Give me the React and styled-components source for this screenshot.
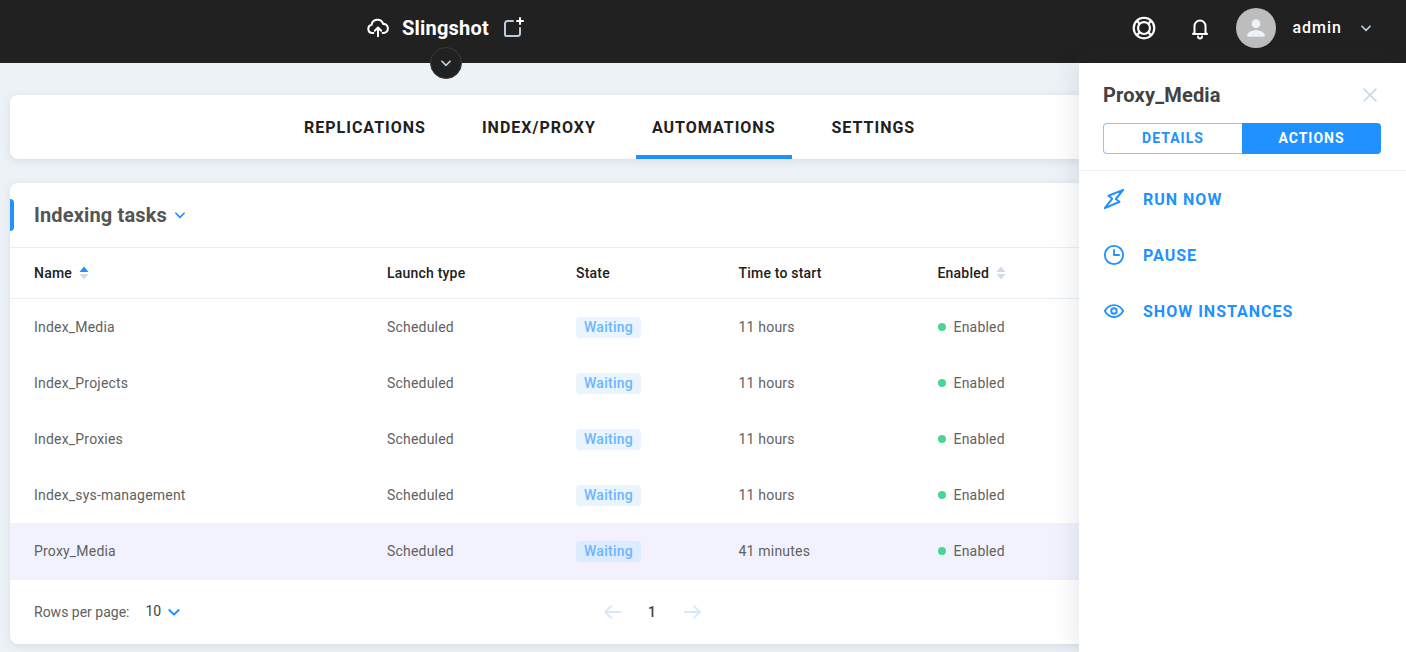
import React from "react";
import styled, { createGlobalStyle } from "styled-components";

const Global = createGlobalStyle`
  html, body { margin: 0; padding: 0; height: 100%; overflow: hidden; background: #edf2f7; }
  body { font-family: Roboto, "Liberation Sans", sans-serif; }
  * { box-sizing: border-box; }
`;

const Page = styled.div`
  position: relative;
  width: 1406px;
  height: 652px;
  overflow: hidden;
  background: #edf2f7;
`;

const Header = styled.header`
  height: 63px;
  background: #212121;
  display: flex;
  align-items: center;
  padding: 0 33px 8px 367px;
  position: relative;
`;

const Brand = styled.div`
  display: flex;
  align-items: center;
  color: #fff;
  font-size: 20px;
  font-weight: 700;
  letter-spacing: 0.2px;
`;

const BrandName = styled.span`
  margin: 0 12px 0 13px;
`;

const Expand = styled.button`
  position: absolute;
  left: 430px;
  top: 47px;
  width: 32px;
  height: 32px;
  border-radius: 50%;
  background: #212121;
  border: 1px solid #3a3a3a;
  padding: 0;
  display: flex;
  align-items: center;
  justify-content: center;
`;

const HeaderRight = styled.div`
  margin-left: auto;
  display: flex;
  align-items: center;
`;

const Avatar = styled.div`
  width: 40px;
  height: 40px;
  border-radius: 50%;
  background: #bdbdbd;
  display: flex;
  align-items: center;
  justify-content: center;
  margin: 0 16px 0 24px;
`;

const BellSlot = styled.div`
  margin-left: 31px;
  display: flex;
`;

const UserName = styled.span`
  color: #fff;
  font-size: 16px;
  font-weight: 500;
  letter-spacing: 1px;
  margin-right: 17px;
`;

const Content = styled.main`
  padding: 32px 10px 0;
`;

const TabsCard = styled.nav`
  height: 64px;
  background: #fff;
  border-radius: 8px;
  box-shadow: 0 2px 8px rgba(45, 70, 100, 0.12);
  display: flex;
  padding-left: 278px;
  gap: 24px;
  margin-bottom: 24px;
`;

const Tab = styled.div`
  height: 64px;
  padding: 0 16px;
  display: flex;
  align-items: center;
  font-size: 16px;
  font-weight: 700;
  letter-spacing: 1px;
  color: #212121;
  border-bottom: 4px solid ${(p) => (p.$active ? "#2191ff" : "transparent")};
  border-top: 4px solid transparent;
`;

const TableCard = styled.section`
  height: 461px;
  background: #fff;
  border-radius: 8px;
  box-shadow: 0 2px 8px rgba(45, 70, 100, 0.12);
  overflow: hidden;
  display: flex;
  flex-direction: column;
`;

const TitleBar = styled.div`
  position: relative;
  height: 65px;
  flex: none;
  display: flex;
  align-items: center;
  padding-left: 24px;
  border-bottom: 1px solid #e8eef5;
  gap: 6px;
`;

const TitleMark = styled.span`
  position: absolute;
  left: 0;
  top: 16px;
  width: 4px;
  height: 32px;
  background: #2191ff;
  border-radius: 0 4px 4px 0;
`;

const Title = styled.h2`
  margin: 0;
  font-size: 20px;
  font-weight: 700;
  color: #555;
  letter-spacing: 0.15px;
`;

const Grid = styled.div`
  display: grid;
  grid-template-columns: 353px 189px 162.5px 199px 1fr;
  align-items: center;
  padding-left: 24px;
  letter-spacing: 0.2px;
`;

const HeadRow = styled(Grid)`
  height: 51px;
  flex: none;
  border-bottom: 1px solid #e8eef5;
  font-size: 14px;
  font-weight: 500;
  color: #212121;
`;

const HeadCell = styled.div`
  display: flex;
  align-items: center;
  gap: 7px;
`;

const Row = styled(Grid)`
  height: 56px;
  flex: none;
  font-size: 14px;
  color: #616161;
  background: ${(p) => (p.$selected ? "#f1f2fd" : "#fff")};
`;

const Badge = styled.span`
  justify-self: start;
  background: ${(p) => (p.$selected ? "#dcebff" : "#e9f4ff")};
  color: #6db6ff;
  font-weight: 500;
  font-size: 14px;
  line-height: 21px;
  padding: 0 8px;
  border-radius: 4px;
  letter-spacing: 0.25px;
`;

const Status = styled.div`
  display: flex;
  align-items: center;
  gap: 8px;
`;

const Dot = styled.span`
  width: 8px;
  height: 8px;
  border-radius: 50%;
  background: #48d597;
`;

const Footer = styled.div`
  position: relative;
  flex: 1;
  display: flex;
  align-items: center;
  padding-left: 24px;
  border-top: 1px solid #eef1f6;
  font-size: 14px;
  color: #616161;
`;

const RowsValue = styled.span`
  color: #424242;
  margin: -2px 5px 0 16px;
`;

const Pager = styled.div`
  position: absolute;
  left: 592px;
  top: 0;
  height: 100%;
  display: flex;
  align-items: center;
`;

const PageNum = styled.span`
  width: 58px;
  padding-right: 2px;
  text-align: center;
  font-weight: 500;
  color: #424242;
`;

const Drawer = styled.aside`
  position: absolute;
  left: 1079px;
  top: 63px;
  width: 327px;
  height: 589px;
  background: #fff;
  box-shadow: -4px 0 24px rgba(30, 50, 80, 0.1);
`;

const DrawerHead = styled.div`
  height: 108px;
  padding: 20px 24px 0;
  border-bottom: 1px solid #edf1f6;
`;

const DrawerTitleRow = styled.div`
  display: flex;
  align-items: center;
  justify-content: space-between;
  height: 24px;
  margin-bottom: 16px;
  padding-right: 3px;
`;

const DrawerTitle = styled.h3`
  margin: 0;
  font-size: 20px;
  font-weight: 700;
  color: #424242;
  letter-spacing: 0.18px;
`;

const Segments = styled.div`
  display: flex;
  width: 278px;
  height: 31px;
`;

const Segment = styled.div`
  flex: 0 0 139px;
  display: flex;
  align-items: center;
  justify-content: center;
  padding-bottom: 1px;
  font-size: 14px;
  font-weight: 700;
  letter-spacing: 1px;
  color: ${(p) => (p.$active ? "#fff" : "#2191ff")};
  background: ${(p) => (p.$active ? "#2191ff" : "#fff")};
  border: ${(p) => (p.$active ? "none" : "1px solid #8cc4f8")};
  border-right: none;
  border-radius: ${(p) => (p.$active ? "0 4px 4px 0" : "4px 0 0 4px")};
`;

const Actions = styled.div`
  display: flex;
  flex-direction: column;
  padding: 0 24px;
`;

const Action = styled.div`
  height: 56px;
  display: flex;
  align-items: center;
  gap: 18px;
  color: #2191ff;
  font-size: 16px;
  font-weight: 700;
  letter-spacing: 1px;
`;

const Icon = ({ size = 24, children, stroke = "currentColor", sw = 2 }) => (
  <svg width={size} height={size} viewBox="0 0 24 24" fill="none" stroke={stroke} strokeWidth={sw} strokeLinecap="round" strokeLinejoin="round">
    {children}
  </svg>
);

const Chevron = ({ color = "#2191ff", size = 16 }) => (
  <Icon size={size} stroke={color} sw={3}>
    <path d="M5 9l7 7 7-7" />
  </Icon>
);

const Sort = ({ active }) => (
  <svg width="10" height="14" viewBox="0 0 10 14">
    <path d="M5 0.5L9.500 6H0.500z" fill={active ? "#2191ff" : "#cfdbe8"} />
    <path d="M5 13.500L0.500 8H9.500z" fill="#cfdbe8" />
  </svg>
);

const rows = [
  ["Index_Media", "11 hours"],
  ["Index_Projects", "11 hours"],
  ["Index_Proxies", "11 hours"],
  ["Index_sys-management", "11 hours"],
  ["Proxy_Media", "41 minutes", true],
];

export default function App() {
  return (
    <Page>
      <Global />
      <Header>
        <Brand>
          <Icon stroke="#fff" size={22} sw={2.2}>
            <path d="M7 17.500H6a4.500 4.500 0 0 1-1-8.900A6.500 6.500 0 0 1 17.600 7.500 5 5 0 0 1 18 17.500h-1" />
            <path d="M12 21v-9.500M8.500 15l3.500-3.500L15.500 15" />
          </Icon>
          <BrandName>Slingshot</BrandName>
          <Icon stroke="#b9cde0" size={24}>
            <path d="M12 5H6.500A2.500 2.500 0 0 0 4 7.500v11A1.500 1.500 0 0 0 5.500 20h11a2.500 2.500 0 0 0 2.500-2.500V12" />
            <path d="M19 2v6M16 5h6" stroke="#fff" />
          </Icon>
        </Brand>
        <Expand aria-label="Expand">
          <Icon size={14} stroke="#b9cde0" sw={3}><path d="M5 9l7 7 7-7" /></Icon>
        </Expand>
        <HeaderRight>
          <Icon size={26} stroke="#fff" sw={2}>
            <circle cx="12" cy="12" r="9.500" />
            <circle cx="12" cy="12" r="5.500" />
            <path d="M5.800 5.800l1.800 1.800M18.200 5.800l-1.800 1.800M5.800 18.200l1.800-1.800M18.200 18.200l-1.800-1.800" />
          </Icon>
          <BellSlot>
            <Icon size={24} stroke="#fff" sw={2}>
              <path d="M6.500 16.500V10a5.500 5.500 0 0 1 11 0v6.500l1.500 1.500H5z" />
              <path d="M10 20.500a2 2 0 0 0 4 0" />
            </Icon>
          </BellSlot>
          <Avatar>
            <svg width="26" height="26" viewBox="0 0 24 24" fill="#edf2f7">
              <circle cx="12" cy="8" r="4" />
              <path d="M4 20v-1.500C4 15.500 9 14 12 14s8 1.500 8 4.500V20z" />
            </svg>
          </Avatar>
          <UserName>admin</UserName>
          <Chevron color="#b9cde0" size={14} />
        </HeaderRight>
      </Header>
      <Content>
        <TabsCard>
          <Tab>REPLICATIONS</Tab>
          <Tab>INDEX/PROXY</Tab>
          <Tab $active>AUTOMATIONS</Tab>
          <Tab>SETTINGS</Tab>
        </TabsCard>
        <TableCard>
          <TitleBar>
            <TitleMark />
            <Title>Indexing tasks</Title>
            <Chevron size={14} />
          </TitleBar>
          <HeadRow>
            <HeadCell>Name <Sort active /></HeadCell>
            <HeadCell>Launch type</HeadCell>
            <HeadCell>State</HeadCell>
            <HeadCell>Time to start</HeadCell>
            <HeadCell>Enabled <Sort /></HeadCell>
          </HeadRow>
          {rows.map(([name, time, selected]) => (
            <Row key={name} $selected={selected}>
              <div>{name}</div>
              <div>Scheduled</div>
              <Badge $selected={selected}>Waiting</Badge>
              <div>{time}</div>
              <Status><Dot />Enabled</Status>
            </Row>
          ))}
          <Footer>
            Rows per page:
            <RowsValue>10</RowsValue>
            <Chevron size={16} />
            <Pager>
              <Icon size={22} stroke="#d6e9fb"><path d="M20 12H3.500M10 5.500L3.500 12l6.500 6.500" /></Icon>
              <PageNum>1</PageNum>
              <Icon size={22} stroke="#d6e9fb"><path d="M3 12h16.500M13 5.500l6.500 6.500-6.500 6.500" /></Icon>
            </Pager>
          </Footer>
        </TableCard>
      </Content>
      <Drawer>
        <DrawerHead>
          <DrawerTitleRow>
            <DrawerTitle>Proxy_Media</DrawerTitle>
            <Icon size={18} stroke="#c5d5e4" sw={2}><path d="M4 4l16 16M20 4L4 20" /></Icon>
          </DrawerTitleRow>
          <Segments>
            <Segment>DETAILS</Segment>
            <Segment $active>ACTIONS</Segment>
          </Segments>
        </DrawerHead>
        <Actions>
          <Action>
            <Icon size={22} sw={2.2}>
              <path d="M22 2L6 8.500l4 3L2 22l16-7-4-3z" />
            </Icon>
            RUN NOW
          </Action>
          <Action>
            <Icon size={22}>
              <circle cx="12" cy="12" r="10" />
              <path d="M12 6.500V12h5.500" />
            </Icon>
            PAUSE
          </Action>
          <Action>
            <Icon size={22}>
              <path d="M2 12c2.500-4.500 6-6.500 10-6.500s7.500 2 10 6.500c-2.500 4.500-6 6.500-10 6.500S4.500 16.500 2 12z" />
              <circle cx="12" cy="12" r="3" />
            </Icon>
            SHOW INSTANCES
          </Action>
        </Actions>
      </Drawer>
    </Page>
  );
}
